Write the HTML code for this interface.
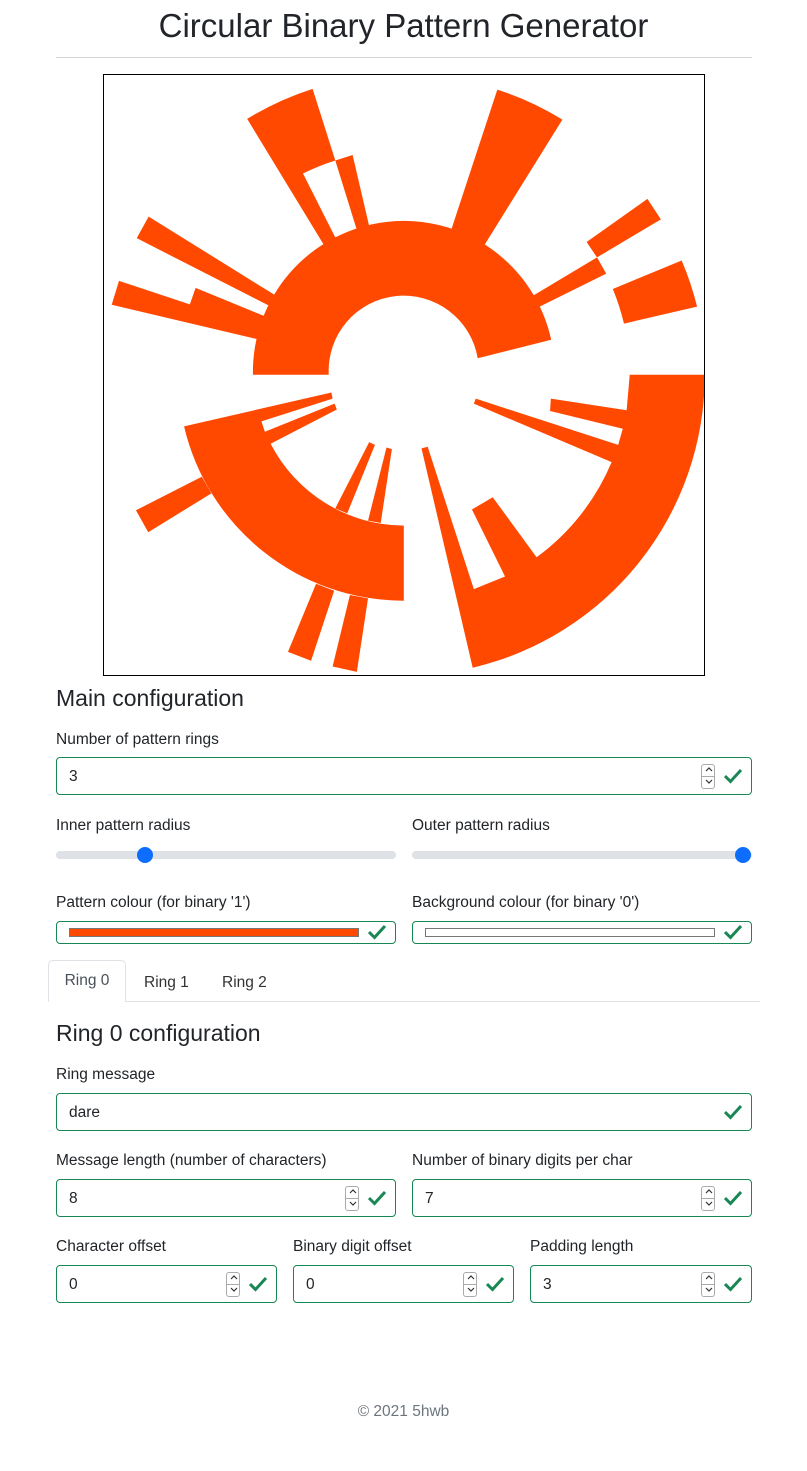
<!DOCTYPE html>
<html><head><meta charset="utf-8"><style>
*{box-sizing:border-box;margin:0;padding:0}
body{width:807px;height:1471px;background:#fff;font-family:"Liberation Sans","DejaVu Sans",sans-serif;color:#212529;position:relative;overflow:hidden}
.a{position:absolute}
h1{position:absolute;left:0;width:807px;top:4px;text-align:center;font-size:33px;font-weight:300;line-height:44px}
.hr{position:absolute;left:56px;width:696px;top:57px;height:1px;background:#d4d4d4}
h4{position:absolute;font-size:23px;font-weight:400;line-height:28px}
.lbl{position:absolute;font-size:15.5px;line-height:20px}
.inp{position:absolute;height:38px;border:1px solid #198754;border-radius:4px;font-size:15.5px;line-height:38px;padding-left:12px}
.spin{position:absolute;right:36px;top:6px;width:14px;height:25px;border:1px solid #aaa;border-radius:3px}
.spin:after{content:"";position:absolute;left:0;right:0;top:11px;height:1px;background:#aaa}
.spin svg{position:absolute;left:2px}
.chk{position:absolute;right:9px;top:10px}
.track{position:absolute;height:8px;background:#dee2e6;border-radius:4px}
.thumb{position:absolute;width:16px;height:16px;border-radius:50%;background:#0d6efd}
</style></head><body>
<h1>Circular Binary Pattern Generator</h1>
<div class="hr"></div>
<div class="a" style="left:103px;top:74px;width:602px;height:602px;border:1px solid #000">
<svg width="600" height="600" viewBox="4 4 1559 1559" style="display:block">
<g fill="#ff4900">
<path d="M391,783 A392,392 0 0 1 1166,692 L975,740 A195,195 0 0 0 588,783 Z"/>
<path d="M376,118 A782,782 0 0 1 546,40 L605,226 A585,585 0 0 0 521,260 L608,432 L578,450 Z"/>
<path d="M605,226 L650,212 L694,401 L662,410 Z"/>
<path d="M1026,42 A782,782 0 0 1 1195,120 L990,450 L905,410 Z"/>
<path d="M1258,438 L1416,326 L1451,379 L1285,478 Z"/>
<path d="M1285,478 L1309,520 L1136,606 L1118,578 Z"/>
<path d="M1326,560 L1505,486 A782,782 0 0 1 1545,606 L1355,650 A587,587 0 0 0 1326,560 Z"/>
<path d="M120,372 L450,577 L434,604 L89,428 Z"/>
<path d="M242,557 L422,631 L410,660 L401,690 L24,601 L43,539 L227,600 Z"/>
<path d="M212,917 A587,587 0 0 0 783,1370 L783,1175 A392,392 0 0 1 437,962 L609,873 L603,858 L422,931 L413,904 L598,845 L595,829 Z"/>
<path d="M605,1130 L693,958 L708,965 L636,1143 Z"/>
<path d="M690,1162 L738,972 L752,976 L723,1168 Z"/>
<path d="M87,1135 L258,1048 L283,1091 L119,1192 Z"/>
<path d="M482,1503 L555,1326 L602,1344 L542,1526 Z"/>
<path d="M598,1541 L643,1355 L690,1364 L661,1555 Z"/>
<path d="M1565,783 A782,782 0 0 1 962,1544 L829,974 L845,970 L965,1340 L1046,1307 L960,1133 L1014,1101 L1128,1257 A587,587 0 0 0 1323,1010 L965,858 L970,845 L1340,965 L1352,923 L1163,877 L1165,845 L1362,875 L1370,783 Z"/>
</g></svg></div>

<h4 style="left:56px;top:684px">Main configuration</h4>
<div class="lbl" style="left:56px;top:730px">Number of pattern rings</div>
<div class="inp" style="left:56px;top:757px;width:696px">3<div class="spin"><svg width="10" height="10" style="top:0"><path d="M2,6 L5,3 L8,6" fill="none" stroke="#333" stroke-width="1.2"/></svg><svg width="10" height="10" style="top:12px"><path d="M2,3 L5,6 L8,3" fill="none" stroke="#333" stroke-width="1.2"/></svg></div><svg class="chk" width="18" height="16"><path d="M1,8 L6.5,13.5 L17,2" fill="none" stroke="#198754" stroke-width="3"/></svg></div>

<div class="lbl" style="left:56px;top:816px">Inner pattern radius</div>
<div class="lbl" style="left:412px;top:816px">Outer pattern radius</div>
<div class="track" style="left:56px;top:851px;width:340px"></div>
<div class="thumb" style="left:137px;top:847px"></div>
<div class="track" style="left:412px;top:851px;width:340px"></div>
<div class="thumb" style="left:735px;top:847px"></div>

<div class="lbl" style="left:56px;top:893px">Pattern colour (for binary '1')</div>
<div class="lbl" style="left:412px;top:893px">Background colour (for binary '0')</div>
<div class="inp" style="left:56px;top:921px;width:340px;height:23px"><div class="a" style="left:12px;top:6px;width:290px;height:9px;background:#ff4900;border:1px solid #777"></div><svg class="a" style="right:9px;top:2px" width="18" height="16"><path d="M1,8 L6.5,13.5 L17,2" fill="none" stroke="#198754" stroke-width="3"/></svg></div>
<div class="inp" style="left:412px;top:921px;width:340px;height:23px"><div class="a" style="left:12px;top:6px;width:290px;height:9px;background:#fff;border:1px solid #777"></div><svg class="a" style="right:9px;top:2px" width="18" height="16"><path d="M1,8 L6.5,13.5 L17,2" fill="none" stroke="#198754" stroke-width="3"/></svg></div>

<div class="a" style="left:48px;top:1001px;width:712px;height:1px;background:#dee2e6"></div>
<div class="a" style="left:48px;top:960px;width:78px;height:42px;border:1px solid #dee2e6;border-bottom-color:#fff;border-radius:5px 5px 0 0;background:#fff;font-size:15.5px;color:#495057;text-align:center;line-height:40px">Ring 0</div>
<div class="a" style="left:144px;top:974px;font-size:15.5px;color:#333">Ring 1</div>
<div class="a" style="left:222px;top:974px;font-size:15.5px;color:#333">Ring 2</div>

<h4 style="left:56px;top:1019px">Ring 0 configuration</h4>
<div class="lbl" style="left:56px;top:1065px">Ring message</div>
<div class="inp" style="left:56px;top:1093px;width:696px">dare<svg class="chk" width="18" height="16"><path d="M1,8 L6.5,13.5 L17,2" fill="none" stroke="#198754" stroke-width="3"/></svg></div>

<div class="lbl" style="left:56px;top:1151px">Message length (number of characters)</div>
<div class="lbl" style="left:412px;top:1151px">Number of binary digits per char</div>
<div class="inp" style="left:56px;top:1179px;width:340px">8<div class="spin"><svg width="10" height="10" style="top:0"><path d="M2,6 L5,3 L8,6" fill="none" stroke="#333" stroke-width="1.2"/></svg><svg width="10" height="10" style="top:12px"><path d="M2,3 L5,6 L8,3" fill="none" stroke="#333" stroke-width="1.2"/></svg></div><svg class="chk" width="18" height="16"><path d="M1,8 L6.5,13.5 L17,2" fill="none" stroke="#198754" stroke-width="3"/></svg></div>
<div class="inp" style="left:412px;top:1179px;width:340px">7<div class="spin"><svg width="10" height="10" style="top:0"><path d="M2,6 L5,3 L8,6" fill="none" stroke="#333" stroke-width="1.2"/></svg><svg width="10" height="10" style="top:12px"><path d="M2,3 L5,6 L8,3" fill="none" stroke="#333" stroke-width="1.2"/></svg></div><svg class="chk" width="18" height="16"><path d="M1,8 L6.5,13.5 L17,2" fill="none" stroke="#198754" stroke-width="3"/></svg></div>

<div class="lbl" style="left:56px;top:1237px">Character offset</div>
<div class="lbl" style="left:293px;top:1237px">Binary digit offset</div>
<div class="lbl" style="left:530px;top:1237px">Padding length</div>
<div class="inp" style="left:56px;top:1265px;width:221px">0<div class="spin"><svg width="10" height="10" style="top:0"><path d="M2,6 L5,3 L8,6" fill="none" stroke="#333" stroke-width="1.2"/></svg><svg width="10" height="10" style="top:12px"><path d="M2,3 L5,6 L8,3" fill="none" stroke="#333" stroke-width="1.2"/></svg></div><svg class="chk" width="18" height="16"><path d="M1,8 L6.5,13.5 L17,2" fill="none" stroke="#198754" stroke-width="3"/></svg></div>
<div class="inp" style="left:293px;top:1265px;width:221px">0<div class="spin"><svg width="10" height="10" style="top:0"><path d="M2,6 L5,3 L8,6" fill="none" stroke="#333" stroke-width="1.2"/></svg><svg width="10" height="10" style="top:12px"><path d="M2,3 L5,6 L8,3" fill="none" stroke="#333" stroke-width="1.2"/></svg></div><svg class="chk" width="18" height="16"><path d="M1,8 L6.5,13.5 L17,2" fill="none" stroke="#198754" stroke-width="3"/></svg></div>
<div class="inp" style="left:530px;top:1265px;width:222px">3<div class="spin"><svg width="10" height="10" style="top:0"><path d="M2,6 L5,3 L8,6" fill="none" stroke="#333" stroke-width="1.2"/></svg><svg width="10" height="10" style="top:12px"><path d="M2,3 L5,6 L8,3" fill="none" stroke="#333" stroke-width="1.2"/></svg></div><svg class="chk" width="18" height="16"><path d="M1,8 L6.5,13.5 L17,2" fill="none" stroke="#198754" stroke-width="3"/></svg></div>

<div class="a" style="left:0;width:807px;top:1403px;text-align:center;font-size:15.5px;color:#6c757d">© 2021 5hwb</div>
</body></html>
